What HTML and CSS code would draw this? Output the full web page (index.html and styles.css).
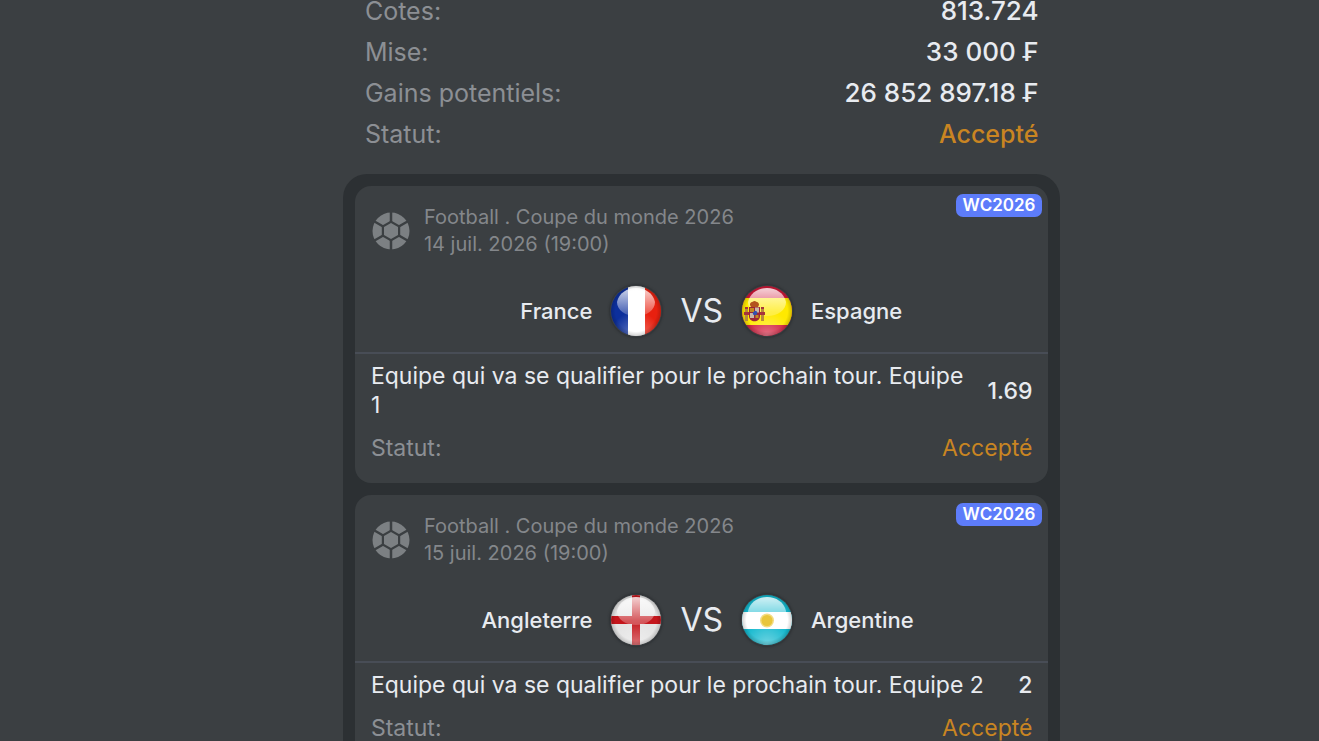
FILE: index.html
```html
<!DOCTYPE html>
<html lang="fr">
<head>
<meta charset="utf-8">
<meta name="viewport" content="width=device-width, initial-scale=1">
<title>Détails du pari</title>
<link rel="stylesheet" href="styles.css">
</head>
<body>
<svg class="defs" width="0" height="0" aria-hidden="true">
  <defs>
    <clipPath id="disc"><circle cx="26" cy="26" r="25"/></clipPath>
    <linearGradient id="gloss" x1="0" y1="0" x2="0" y2="1">
      <stop offset="0" stop-color="#fff" stop-opacity=".8"/>
      <stop offset="1" stop-color="#fff" stop-opacity=".2"/>
    </linearGradient>
    <radialGradient id="glow" cx=".5" cy="1" r=".5">
      <stop offset="0" stop-color="#fff" stop-opacity=".4"/>
      <stop offset="1" stop-color="#fff" stop-opacity="0"/>
    </radialGradient>
    <radialGradient id="rim" cx=".5" cy=".5" r=".5">
      <stop offset=".82" stop-color="#000" stop-opacity="0"/>
      <stop offset="1" stop-color="#000" stop-opacity=".18"/>
    </radialGradient>
    <g id="shine">
      <circle cx="26" cy="26" r="25" fill="url(#glow)"/>
      <circle cx="26" cy="26" r="25" fill="url(#rim)"/>
      <path d="M7 17C9 8 17 3 26 3s17 5 19 14c0 8-8 14-19 14S7 25 7 17z" fill="url(#gloss)"/>
    </g>
    <symbol id="ball" viewBox="0 0 38 38">
      <circle class="ball-fill" cx="19" cy="19" r="18.5"/>
      <path class="ball-seam" d="M19 0v38M2.500 9.500l33 19M35.500 9.500l-33 19"/>
      <path class="ball-gap" d="M19 8.600l9.200 5.200v10.400L19 29.400l-9.200-5.200v-10.400z"/>
      <path class="ball-fill" d="M19 11l7 4v8l-7 4-7-4v-8z"/>
    </symbol>
  </defs>
</svg>

<main class="page">
  <div class="slip">
    <dl class="summary">
      <div class="row"><dt>Cotes:</dt><dd>813.724</dd></div>
      <div class="row"><dt>Mise:</dt><dd>33 000 ₣</dd></div>
      <div class="row"><dt>Gains potentiels:</dt><dd>26 852 897.18 ₣</dd></div>
      <div class="row"><dt>Statut:</dt><dd class="accepted">Accepté</dd></div>
    </dl>

    <section class="events">
      <article class="card">
        <span class="badge">WC2026</span>
        <header class="event">
          <svg class="ball" aria-hidden="true"><use href="#ball"/></svg>
          <div>
            <p>Football . Coupe du monde 2026</p>
            <p>14 juil. 2026 (19:00)</p>
          </div>
        </header>
        <div class="match">
          <span class="home">France</span>
          <svg class="flag" viewBox="0 0 52 52" role="img" aria-label="Drapeau France">
            <g clip-path="url(#disc)">
              <path fill="#0c2f9c" d="M0 0h18v52H0z"/>
              <path fill="#fff" d="M18 0h17v52H18z"/>
              <path fill="#e8200f" d="M35 0h17v52H35z"/>
              <use href="#shine"/>
            </g>
          </svg>
          <span class="versus">VS</span>
          <svg class="flag" viewBox="0 0 52 52" role="img" aria-label="Drapeau Espagne">
            <g clip-path="url(#disc)">
              <path fill="#d01838" d="M0 0h52v52H0z"/>
              <path fill="#ffe900" d="M0 13h52v27H0z"/>
              <use href="#shine"/>
              <g>
                <path fill="#b88b3c" d="M4 22h3v14H4zM20 22h3v14h-3z"/>
                <path fill="#a6343b" d="M3 27h5v3H3zM19 27h5v3h-5zM4 22h3v2H4zM20 22h3v2h-3z"/>
                <path fill="#b3541e" d="M9 20c0-3 2-3 4.500-4 2.500 1 4.500 1 4.500 4l-1 2h-7z"/>
                <path fill="#9c2636" d="M8 22h11v9c0 7-11 7-11 0z"/>
                <path fill="#c9b7a8" d="M14 22.500h4v5h-4zM9 28h4v5H9z"/>
                <circle cx="14" cy="28" r="2.300" fill="#3451ae"/>
                <path fill="#c48a22" d="M9 23h4v4H9zM14.500 30h3v3h-3z"/>
              </g>
            </g>
          </svg>
          <span class="away">Espagne</span>
        </div>
        <div class="pick">
          <div class="market"><p>Equipe qui va se qualifier pour le prochain tour. Equipe 1</p><span class="odds">1.69</span></div>
          <div class="status"><span>Statut:</span><span class="accepted">Accepté</span></div>
        </div>
      </article>

      <article class="card">
        <span class="badge">WC2026</span>
        <header class="event">
          <svg class="ball" aria-hidden="true"><use href="#ball"/></svg>
          <div>
            <p>Football . Coupe du monde 2026</p>
            <p>15 juil. 2026 (19:00)</p>
          </div>
        </header>
        <div class="match">
          <span class="home">Angleterre</span>
          <svg class="flag" viewBox="0 0 52 52" role="img" aria-label="Drapeau Angleterre">
            <g clip-path="url(#disc)">
              <path fill="#e4e4e4" d="M0 0h52v52H0z"/>
              <path fill="#c4161c" d="M22 0h8v52h-8zM0 22h52v8H0z"/>
              <use href="#shine"/>
            </g>
          </svg>
          <span class="versus">VS</span>
          <svg class="flag" viewBox="0 0 52 52" role="img" aria-label="Drapeau Argentine">
            <g clip-path="url(#disc)">
              <path fill="#12b8ce" d="M0 0h52v52H0z"/>
              <path fill="#fff" d="M0 18h52v17H0z"/>
              <use href="#shine"/>
              <circle cx="26" cy="26.500" r="7" fill="#f3dc82"/>
              <circle cx="26" cy="26.500" r="5.500" fill="#e8c63c"/>
            </g>
          </svg>
          <span class="away">Argentine</span>
        </div>
        <div class="pick">
          <div class="market"><p>Equipe qui va se qualifier pour le prochain tour. Equipe 2</p><span class="odds">2</span></div>
          <div class="status"><span>Statut:</span><span class="accepted">Accepté</span></div>
        </div>
      </article>
    </section>
  </div>
</main>
</body>
</html>
```
FILE: styles.css
```css
* { box-sizing: border-box; }

body, p, dl, dd { margin: 0; }

body {
  background: #3b3f42;
  color: #e8ebf0;
  font-family: Inter, "Liberation Sans", sans-serif;
}

.defs { position: absolute; }

.page {
  display: grid;
  grid-template-columns: 26fr 54.4fr 19.6fr;
  height: 100vh;
  overflow: hidden;
}

.slip {
  grid-column: 2;
  display: flex;
  flex-direction: column;
  gap: 29px;
}

.summary {
  display: flex;
  flex-direction: column;
  gap: 19px;
  padding: 0 22px;
  font-size: 26px;
  line-height: 22px;
}

.row, .status, .market {
  display: flex;
  justify-content: space-between;
}

.row dt, .status { color: #8c8f94; }

.row dt { font-size: 25px; }

.row dd { font-weight: 500; }

.row .accepted, .status .accepted { color: #c98522; }

.row .accepted { font-size: 25px; }

.events {
  display: flex;
  flex-direction: column;
  gap: 12px;
  padding: 12px;
  border-radius: 24px;
  background: #2c3033;
}

.card {
  position: relative;
  border-radius: 16px;
  background: #3b3f42;
}

.badge {
  position: absolute;
  top: 8px;
  right: 6px;
  padding: 0 7px;
  border-radius: 7px;
  background: #5d7cfa;
  color: #fff;
  font-size: 17px;
  font-weight: 600;
  line-height: 23px;
}

.event {
  display: flex;
  align-items: center;
  gap: 14px;
  padding: 18px 17px 0;
  color: #84878b;
  font-size: 20px;
  line-height: 27px;
}

.ball { width: 38px; height: 38px; }
.ball-fill { fill: #7c8083; }
.ball-gap { fill: #3b3f42; }
.ball-seam { stroke: #3b3f42; stroke-width: 2.5; }

.match {
  display: grid;
  grid-template-columns: 1fr auto auto auto 1fr;
  align-items: center;
  gap: 18px;
  padding: 27px 16px 15px;
  border-bottom: 2px solid #484d56;
  font-size: 22px;
  font-weight: 500;
}

.home { text-align: right; }

.flag {
  width: 52px;
  height: 52px;
  border-radius: 50%;
  box-shadow: 0 0 3px #202326;
}

.versus { font-size: 32px; font-weight: 400; line-height: 36px; }

.pick {
  display: flex;
  flex-direction: column;
  gap: 14px;
  padding: 8px 16px 20px;
  font-size: 23px;
  line-height: 29px;
}

.market { align-items: center; gap: 24px; }

.odds { font-weight: 500; }
```
